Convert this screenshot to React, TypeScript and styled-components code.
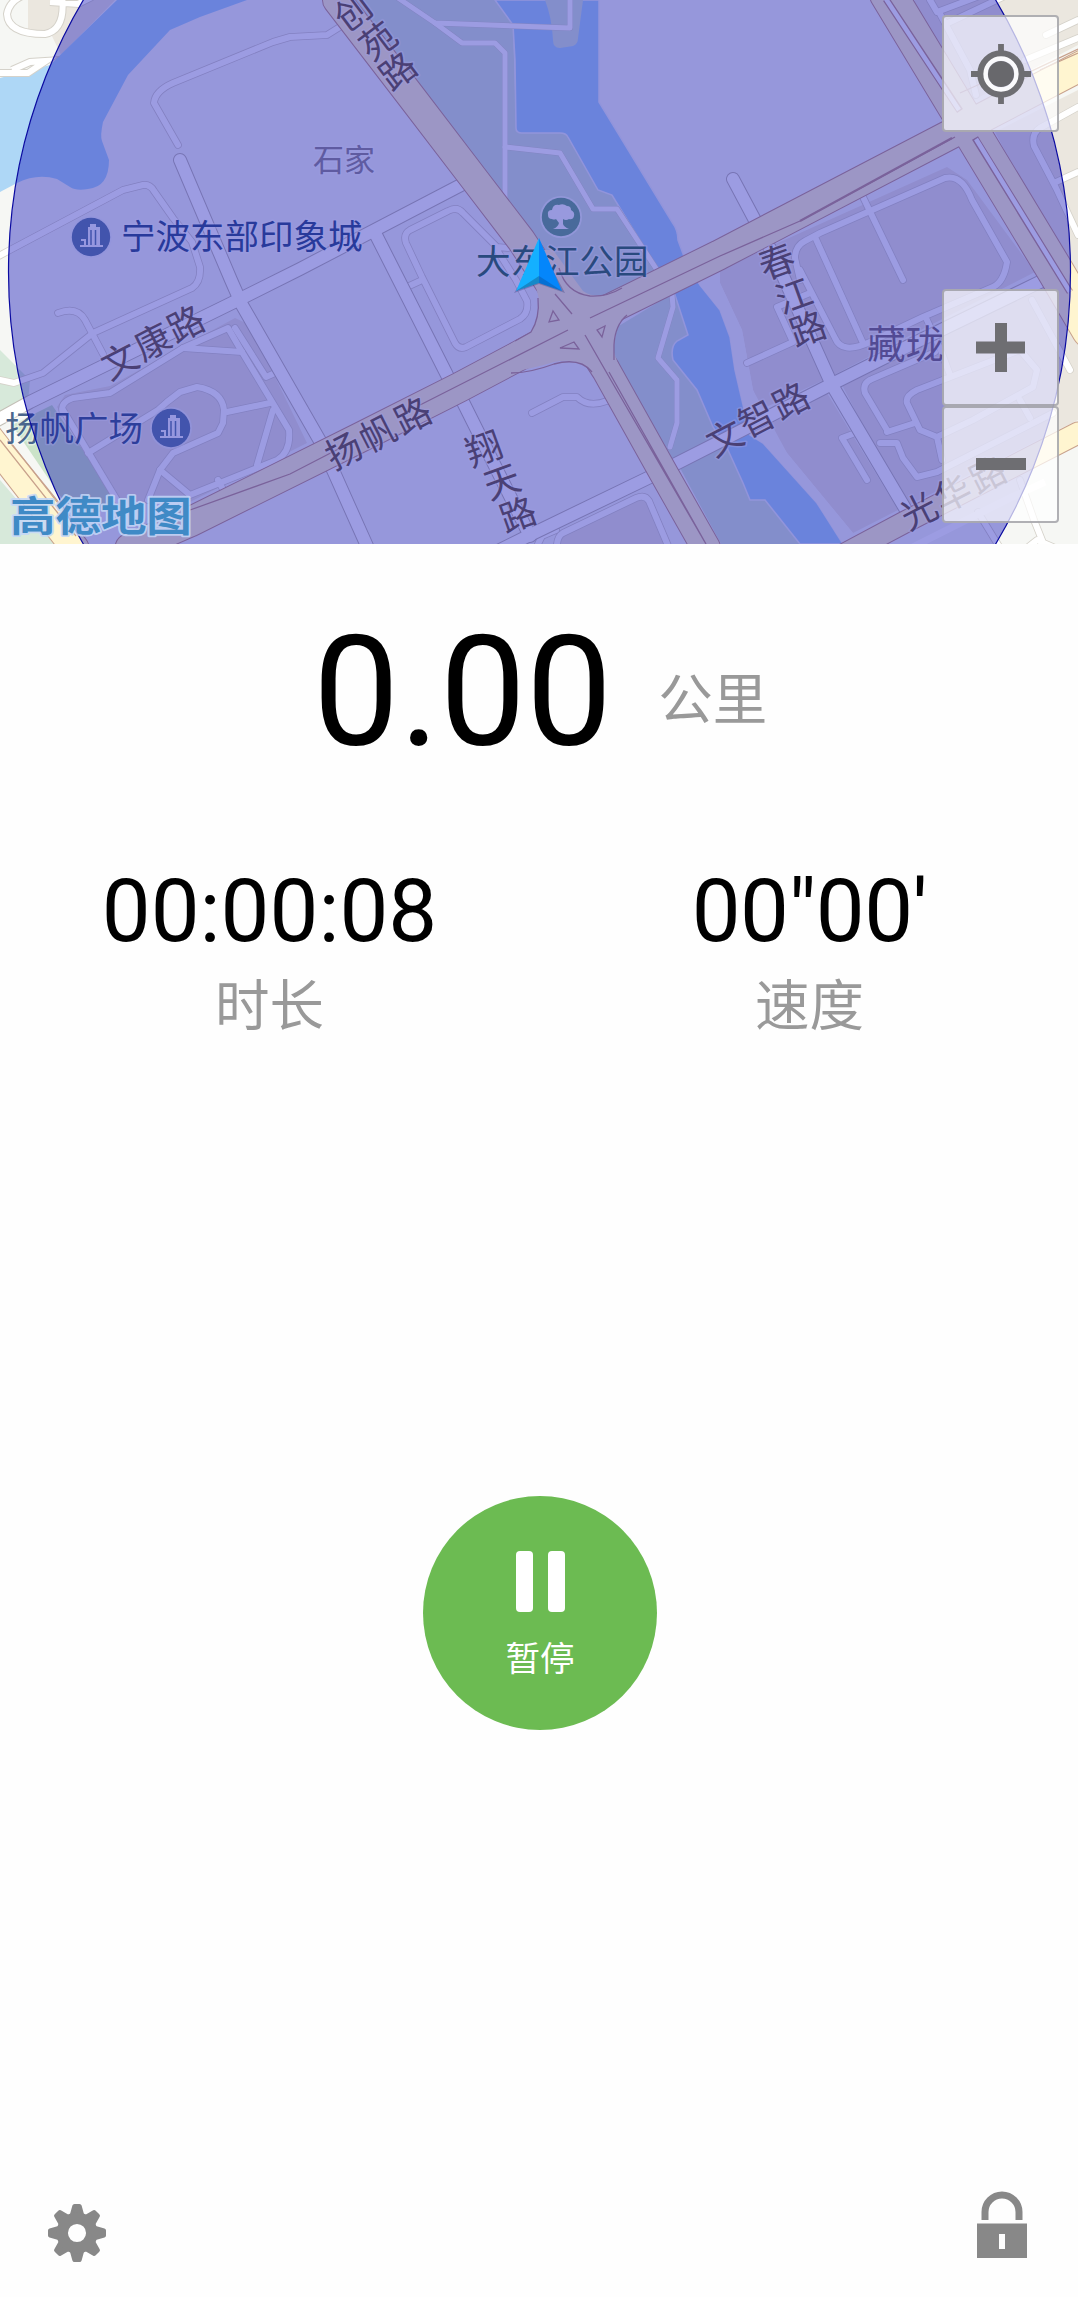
import React from 'react';
import styled, { createGlobalStyle } from 'styled-components';

const cjk = '"Noto Sans CJK SC", "Noto Sans", sans-serif';

const GlobalStyle = createGlobalStyle`
  * { box-sizing: border-box; }
  body { margin: 0; background: #fefefe; }
  button { border: 0; padding: 0; margin: 0; font: inherit; cursor: pointer; }
`;

const Screen = styled.main`
  display: flex;
  flex-direction: column;
  width: 1078px;
  height: 2297px;
  overflow: hidden;
  background: #fefefe;
  font-family: Roboto, ${cjk};
`;

const MapPanel = styled.section`
  position: relative;
  flex: none;
  height: 544px;
  overflow: hidden;
`;

const MapCanvas = styled.svg`
  display: block;
  width: 1078px;
  height: 544px;
`;

const MapControls = styled.div`
  position: absolute;
  top: 15px;
  right: 19px;
  display: flex;
  flex-direction: column;
  justify-content: space-between;
  height: 508px;
`;

const ZoomGroup = styled.div`
  display: flex;
  flex-direction: column;
`;

const MapButton = styled.button`
  display: flex;
  align-items: center;
  justify-content: center;
  width: 117px;
  height: 117px;
  border: 2px solid rgba(150, 150, 155, 0.75);
  border-radius: 4px;
  background: rgba(255, 255, 255, 0.7);
`;

const Distance = styled.section`
  display: flex;
  align-items: center;
  height: 182px;
  margin-top: 58px;
  padding-left: 313px;
`;

const DistanceValue = styled.span`
  font-size: 153.5px;
  line-height: 182px;
  color: #000;
`;

const Unit = styled.span`
  margin: 5px 0 0 46px;
  font-family: ${cjk};
  font-size: 54.5px;
  line-height: 78px;
  color: #999;
`;

const Stats = styled.section`
  display: grid;
  grid-template-columns: 1fr 1fr;
  margin-top: 75px;
`;

const Stat = styled.div`
  display: flex;
  flex-direction: column;
  align-items: center;
  &:last-child {
    padding-left: 2px;
  }
`;

const StatValue = styled.span<{ $tracking?: number }>`
  font-size: 87px;
  line-height: 104px;
  letter-spacing: ${(p) => p.$tracking ?? 0}px;
  color: #000;
`;

const StatLabel = styled.span`
  margin-top: -1px;
  font-family: ${cjk};
  font-size: 54.5px;
  line-height: 80px;
  color: #999;
`;

const Actions = styled.section`
  display: flex;
  justify-content: center;
  margin-top: 454px;
  padding-left: 2px;
`;

const PauseButton = styled.button`
  display: flex;
  flex-direction: column;
  align-items: center;
  width: 234px;
  height: 234px;
  padding-top: 55px;
  border-radius: 50%;
  background: #6cbb52;
  color: #fff;
`;

const PauseBars = styled.span`
  display: flex;
  gap: 15px;
  height: 61px;
  &::before,
  &::after {
    content: '';
    width: 17px;
    border-radius: 4px;
    background: #fff;
  }
`;

const PauseLabel = styled.span`
  margin-top: 19px;
  font-family: ${cjk};
  font-size: 34.5px;
  line-height: 50px;
`;

const Footer = styled.footer`
  display: flex;
  justify-content: space-between;
  align-items: center;
  margin-top: auto;
  padding: 0 51px 34px 47px;
`;

const IconButton = styled.button<{ $drop?: number }>`
  display: flex;
  padding-top: ${(p) => p.$drop ?? 0}px;
  background: none;
  color: #888;
`;

type Kind = 'main' | 'street' | 'lane' | 'path';

const roadStyle: Record<Kind, { fill: string; casing: string; edge: number }> = {
  main: { fill: '#fff5d0', casing: '#c8a18c', edge: 2 },
  street: { fill: '#ffffff', casing: '#c3bfb6', edge: 2 },
  lane: { fill: '#ffffff', casing: '#d5d2ca', edge: 1.6 },
  path: { fill: '#ffffff', casing: '#d3d8cc', edge: 1 },
};

interface Road {
  kind: Kind;
  width: number;
  d: string;
}

const lanes: Road[] = [
  'M343 25 L327 35 L290 37 L273 42 L173 83 Q155 91 154 103 L178 145',
  'M-5 258 L10 250 L123 190 L143 185 Q150 184 154 191 L173 218 L192 242 L200 267 Q201 282 192 288 L93 333 L43 373 L14 383 L0 380',
  'M58 313 Q77 306 85 320 L103 354',
  'M63 413 Q59 403 73 398 L110 393 L183 348 L228 328 L242 352 L289 430 Q291 452 277 460 L190 495 L160 470',
  'M63 410 L90 455 L117 500',
  'M183 348 L242 352 M88 453 L158 410 L167 402 L180 392 L197 387 Q222 391 224 410 L223 423 L218 433 L173 453 L160 470 L148 500',
  'M227 412 L270 403 M273 410 L257 465 M218 480 L225 493',
  'M235 328 L266 377 L275 373',
  'M508 248 L497 247 L463 213 Q457 206 448 211 L410 230 Q403 234 406 243 L422 277 L455 343 Q459 350 466 347 L520 319 Q529 313 527 301 L516 280 L497 250',
  'M407 287 L420 281',
  'M532 413 L563 397 L577 397 Q588 408 607 401',
  'M557 550 Q556 537 563 533 L636 498 Q645 494 649 501 L669 548',
  'M538 544 L542 536 L556 530',
  'M800 280 L795 258 Q795 246 805 241 L820 233 L945 178 Q962 174 972 200 L1007 262 Q1004 282 993 287 L923 317 L870 342 Q842 355 835 338 L800 270',
  'M863 197 L903 280 M815 237 L830 270 L863 343',
  'M747 363 L793 342 L777 307 L810 293',
  'M887 430 L865 393 Q862 383 872 379 L935 352 M887 432 L915 423',
  'M937 437 L920 430 L907 403 Q905 396 917 390 L1020 350 L1037 370 L1033 387 L973 420 L937 437 L942 460',
  'M880 443 L897 443 L903 458 L917 477 L937 472 L1053 413',
  'M867 480 L842 438 L858 432',
  'M926 318 L940 348 L950 375',
  'M1032 300 L1070 370 M1020 400 L1030 418',
  'M930 0 L937 12 L982 -5 M939 12 L970 70 L976 95 M948 23 L1005 -4',
  'M1078 107 L1040 128 Q1031 134 1034 146 L1056 188 L1078 235',
  'M1056 182 L1078 172 M1046 35 L1078 20 M1025 60 L1078 38',
  'M1020 480 L1034 520 L1050 560 M1012 560 L1037 540 L1078 558',
  'M978 512 L1000 548',
].map((d) => ({ kind: 'lane', width: 6, d }));

const parkPaths: Road[] = [
  'M398 -2 L435 23 L570 28 L570 -5',
  'M435 23 L462 43 L495 43 L505 53 L505 203',
  'M505 147 L560 153 L593 209 L617 209 L657 270',
  'M672 294 L673 307 L658 358 L677 380 L677 423 L670 447',
].map((d) => ({ kind: 'path', width: 5, d }));

const streets: Road[] = [
  'M-10 424 L30 402 L232 303 L300 269 L461 185',
  'M180 160 L231 280 L242 305 L320 441 L367 546',
  'M376 235 L447 375 L463 402 L530 536',
  'M480 560 L530 535 L650 477 L719 442 L830 385 L900 350 L1048 278',
  'M733 179 L758 226 L774 256 L832 385 L906 510',
].map((d) => ({ kind: 'street', width: 12, d }));

const mains: Road[] = [
  { kind: 'main', width: 28, d: 'M337 0 L410 95 L475 180 L521 240 L577 325 L606 370 L663 472 L706 548' },
  { kind: 'main', width: 29, d: 'M130 548 L190 522 L359 438 L460 387 L577 325 L719 255 L955 132 L1085 64' },
  { kind: 'main', width: 36, d: 'M888 -6 L1056 272 L1090 330' },
  { kind: 'main', width: 27, d: 'M-15 432 L75 548' },
  { kind: 'main', width: 21, d: 'M830 562 L905 522 L1078 433' },
];

function RoadNetwork({ roads }: { roads: Road[] }) {
  return (
    <g fill="none" strokeLinejoin="round" strokeLinecap="round">
      {roads.map((r) => (
        <path key={`c${r.d}`} d={r.d} stroke={roadStyle[r.kind].casing} strokeWidth={r.width + roadStyle[r.kind].edge} />
      ))}
      {roads.map((r) => (
        <path key={`f${r.d}`} d={r.d} stroke={roadStyle[r.kind].fill} strokeWidth={r.width} />
      ))}
    </g>
  );
}

const MapText = styled.text<{ $size: number; $tone?: string }>`
  font-family: ${cjk};
  font-size: ${(p) => p.$size}px;
  fill: ${(p) => p.$tone ?? '#7a694e'};
  stroke: rgba(255, 255, 255, 0.45);
  stroke-width: 3px;
  stroke-linejoin: round;
  paint-order: stroke;
`;

const LogoText = styled.text`
  font-family: ${cjk};
  font-size: 45px;
  font-weight: 700;
  fill: #3f8ac6;
  stroke: rgba(195, 215, 248, 0.85);
  stroke-width: 4px;
  stroke-linejoin: round;
  paint-order: stroke;
`;

interface StreetLabel {
  angle: number;
  chars: [string, number, number][];
}

const streetLabels: StreetLabel[] = [
  { angle: -37, chars: [['创', 353, 12], ['苑', 378, 41], ['路', 398, 71]] },
  { angle: -27, chars: [['文', 120, 361], ['康', 153, 342], ['路', 186, 324]] },
  { angle: -27, chars: [['扬', 344, 451], ['帆', 378, 434], ['路', 413, 416]] },
  { angle: -20, chars: [['翔', 484, 449], ['天', 502, 482], ['路', 518, 515]] },
  { angle: -20, chars: [['春', 777, 262], ['江', 794, 296], ['路', 808, 329]] },
  { angle: -27, chars: [['文', 725, 438], ['智', 757, 419], ['路', 791, 401]] },
  { angle: -27, chars: [['光', 919, 511], ['华', 953, 494], ['路', 988, 475]] },
];

function BuildingPin({ x, y }: { x: number; y: number }) {
  return (
    <g transform={`translate(${x} ${y})`}>
      <circle r="21" fill="#f0f2f6" opacity=".7" />
      <circle r="19.2" fill="#6d89a8" />
      <path d="M-11 10H12V8H9V-10H5V-13H-1V-10H-3V8H-5V2H-10V4H-7V8H-11Z" fill="#f5f7fb" />
      <path d="M0-7V8M4.500-7V8" stroke="#6d89a8" strokeWidth="1.500" />
    </g>
  );
}

function CityMap() {
  return (
    <MapCanvas viewBox="0 0 1078 544">
      <rect width="1078" height="544" fill="#f6f7f4" />
      <g fill="#ebe7df">
        <path d="M28 0H115L61 55L52 36L28 30Z" />
        <path d="M57 407L65 395L110 386L235 318L250 325L307 443L190 502L117 505Z" />
        <path d="M557 544L562 535L640 499L648 503L667 544Z" />
        <path d="M720 270L780 242L947 167L967 180L1035 272L905 338L828 378L760 410L753 390L742 330L720 283Z" />
        <path d="M762 415L824 388L898 510L853 533L787 453Z" />
        <path d="M842 385L1050 282L1078 330V420L905 507Z" />
        <path d="M915 0H1078V45L955 110L900 20Z" />
        <path d="M995 132L1078 90V280L1062 260Z" />
      </g>
      <path d="M0 78L50 65L117 0H247L200 17L170 30L128 75L103 122Q100 136 102 141L109 160Q109 187 88 189Q76 191 70 187L57 179Q37 173 17 183L0 192Z" fill="#aed7f6" />
      <g fill="#d7e9da">
        <path d="M345 0H495L513 25L516 130L565 133L598 188L612 195L660 270L610 296L590 300L470 165Z" />
        <path d="M617 327L670 295L720 310L735 370L728 448L713 452L672 460L612 358Z" />
        <path d="M680 468L728 445L765 500L804 544H721Z" />
        <path d="M0 350L30 380L28 403L0 417Z" />
        <path d="M12 425L52 405L117 500L80 525Z" fill="#cbe3c8" />
        <path d="M0 480L55 544H0Z" />
      </g>
      <g fill="#aed7f6">
        <path d="M495 0H599V102L672 222Q678 230 678 240L686 262L700 285L720 310L730 337L735 370L750 435L763 443L817 503L843 544H800L765 500L750 500L743 483L728 450L713 427L697 390L673 360Q670 347 677 341L688 335L675 295L655 265L612 195L598 190L568 137Q566 133 560 133H522Q516 133 516 128L515 60L513 25Z" stroke="#eef2f4" strokeWidth="1.500" />
      </g>
      <path d="M545 0Q552 18 553 40Q553 48 560 48L573 46Q578 44 578 38L583 0Z" fill="#d7e9da" />
      <path d="M698 283L720 283L742 330L753 390L787 453L853 533L843 544L817 503L763 443L750 435L735 370L730 337L720 310Z" fill="#f6f7f4" />

      <RoadNetwork roads={parkPaths} />
      <RoadNetwork roads={lanes} />
      <g fill="none">
        <path d="M62 -4Q66 30 45 34Q8 34 7 14Q9 2 22 -4M50 2L78 4L92 -3M-4 73H28L46 61L30 62L12 70" stroke="#d5d2ca" strokeWidth="8" />
        <path d="M62 -4Q66 30 45 34Q8 34 7 14Q9 2 22 -4M50 2L78 4L92 -3M-4 73H28L46 61L30 62L12 70" stroke="#fff" strokeWidth="6" />
      </g>
      <RoadNetwork roads={streets} />
      <path d="M907 550L1010 498L1045 482" stroke="#fff" strokeWidth="7" fill="none" />
      <RoadNetwork roads={mains} />
      <path
        d="M528 250L539 300Q540 318 531 332L500 350L510 372Q535 368 554 362Q580 357 592 372L620 370L614 352Q612 330 625 315L650 288L610 295Q592 298 583 291L553 250Z"
        fill="#fff5d0"
      />
      <g fill="none" stroke="#c8a18c" strokeWidth="1.300">
        <path d="M538 298Q540 318 531 332L515 341M511 373Q530 373 554 364Q580 357 592 372M614 360V345Q615 325 627 315M559 268Q566 293 590 296Q607 297 622 288" />
        <path d="M420 405L568 330M590 318L720 256L800 221L955 137M555 294L572 314M585 335L612 382L706 544M609 372L706 544" />
        <path d="M549 322L553 311L559 320ZM560 348L574 342L579 349ZM597 330L605 326L602 337Z" />
        <path d="M190 510L290 474L350 443M8 440L86 536M0 440L76 536M1000 86L1078 49M960 93L1020 66M1078 53L1040 70" />
      </g>
      <g fill="none" strokeWidth="7">
        <path d="M886 -1L960 111M975 138L1070 292" stroke="#c8a18c" />
        <path d="M886 -1L959 110M976 139L1070 292" stroke="#fff" strokeWidth="4.500" />
      </g>
      <path d="M800 221L952 138" stroke="#c8a18c" strokeWidth="2" />

      <g textAnchor="middle">
        {streetLabels.map((label, i) => (
          <g key={i}>
            {label.chars.map(([c, x, y]) => (
              <MapText key={c} $size={36} transform={`translate(${x} ${y}) rotate(${label.angle})`} dy="13">
                {c}
              </MapText>
            ))}
          </g>
        ))}
      </g>
      <MapText $size={31} $tone="#9b9596" x="313" y="171">石家</MapText>
      <MapText $size={34.5} $tone="#42608c" x="121" y="249">宁波东部印象城</MapText>
      <MapText $size={34.5} $tone="#44795c" x="476" y="274">大东江公园</MapText>
      <MapText $size={34.5} $tone="#4a668c" x="5" y="441">扬帆广场</MapText>
      <MapText $size={38.5} $tone="#867a80" x="867" y="358">藏珑</MapText>
      <BuildingPin x={91} y={237} />
      <BuildingPin x={171} y={428} />
      <g transform="translate(561 217)">
        <circle r="21" fill="#fff" opacity=".6" />
        <circle r="19.200" fill="#76ae8c" />
        <path d="M-8 12Q-3 10-2 6L-5 2Q-7 3-9 2Q-13 2-13-2Q-14-7-9-7Q-8-13-2-12Q2-14 6-11Q10-11 10-7Q14-5 13-1Q12 3 8 2Q5 4 2 2L2 7Q3 10 8 12Z" fill="#f8fbf8" />
      </g>

      <circle cx="539.5" cy="272" r="531" fill="rgba(0, 0, 180, 0.39)" stroke="#0a0aa0" strokeWidth="1.200" />

      <LogoText x="0" y="0" transform="translate(10 531) scale(1.01 .91)">高德地图</LogoText>
      <path d="M514 293L539 284L565 293L542 250Z" fill="#283070" opacity=".3" />
      <path d="M539 238L516 291L539 277Z" fill="#14b0ff" />
      <path d="M539 238L562 291L539 277Z" fill="#0486fb" />
      <path d="M516 291L539 276L539 283Z" fill="#1489c8" />
      <path d="M562 291L539 276L539 283Z" fill="#0670d4" />
    </MapCanvas>
  );
}

function LocateIcon() {
  return (
    <svg width="60" height="60" viewBox="0 0 62 62" fill="none">
      <path d="M31 0V12M31 50V62M0 31H12M50 31H62" stroke="#6e6e72" strokeWidth="6" />
      <circle cx="31" cy="31" r="21" stroke="#6e6e72" strokeWidth="7" />
      <circle cx="31" cy="31" r="16" stroke="#fafafc" strokeWidth="4.500" />
      <circle cx="31" cy="31" r="13.500" fill="#68686c" />
    </svg>
  );
}

function GearIcon() {
  return (
    <svg width="60" height="60" viewBox="-30 -30 60 60" fill="currentColor">
      {[0, 45, 90, 135, 180, 225, 270, 315].map((a) => (
        <path key={a} transform={`rotate(${a})`} d="M-7.500-17L-4.600-27.500Q-4.200-29-2.500-29H2.500Q4.200-29 4.600-27.500L7.500-17Z" />
      ))}
      <circle r="14.800" fill="none" stroke="currentColor" strokeWidth="11.500" />
    </svg>
  );
}

function LockIcon() {
  return (
    <svg width="50" height="68" viewBox="0 0 50 68">
      <path d="M8 29V21A17 17 0 0 1 42 21V29" fill="none" stroke="currentColor" strokeWidth="7" />
      <path fillRule="evenodd" fill="currentColor" d="M0 32.500H50V67H0ZM22 43V58H28V43Z" />
    </svg>
  );
}

export default function App() {
  return (
    <Screen>
      <GlobalStyle />
      <MapPanel>
        <CityMap />
        <MapControls>
          <MapButton aria-label="locate">
            <LocateIcon />
          </MapButton>
          <ZoomGroup>
            <MapButton aria-label="zoom in">
              <svg width="50" height="50" viewBox="0 0 50 50">
                <path d="M25 0V49M0 24.500H49" stroke="#6e6e72" strokeWidth="12" />
              </svg>
            </MapButton>
            <MapButton aria-label="zoom out">
              <svg width="50" height="50" viewBox="0 0 50 50">
                <path d="M0 24H50" stroke="#6e6e72" strokeWidth="12" />
              </svg>
            </MapButton>
          </ZoomGroup>
        </MapControls>
      </MapPanel>
      <Distance>
        <DistanceValue>0.00</DistanceValue>
        <Unit>公里</Unit>
      </Distance>
      <Stats>
        <Stat>
          <StatValue>00:00:08</StatValue>
          <StatLabel>时长</StatLabel>
        </Stat>
        <Stat>
          <StatValue $tracking={-0.5}>00"00'</StatValue>
          <StatLabel>速度</StatLabel>
        </Stat>
      </Stats>
      <Actions>
        <PauseButton>
          <PauseBars />
          <PauseLabel>暂停</PauseLabel>
        </PauseButton>
      </Actions>
      <Footer>
        <IconButton aria-label="settings" $drop={17}>
          <GearIcon />
        </IconButton>
        <IconButton aria-label="lock">
          <LockIcon />
        </IconButton>
      </Footer>
    </Screen>
  );
}
